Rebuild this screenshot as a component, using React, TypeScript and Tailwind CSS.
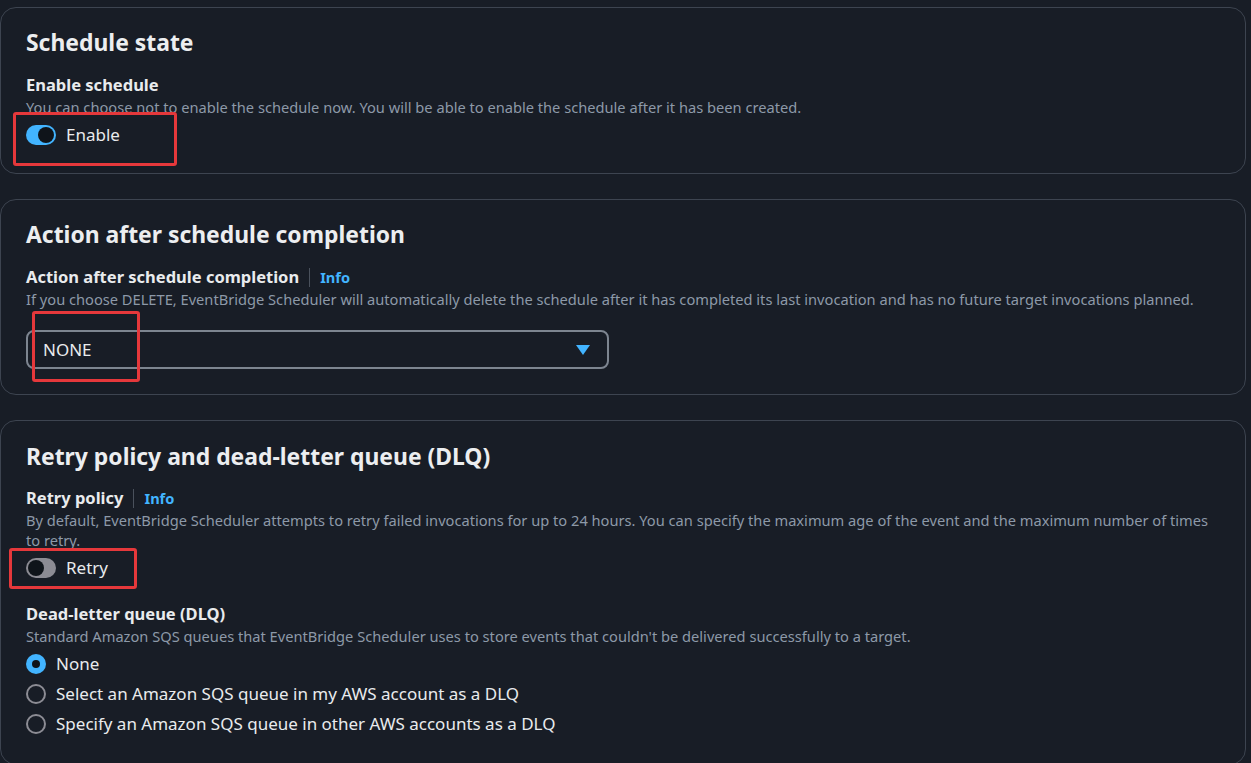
import React from 'react';

const Card: React.FC<{ children: React.ReactNode; className?: string }> = ({ children, className }) => (
  <div className={`border border-[#3d4450] rounded-[16px] bg-[#181d26] px-[25px] ${className ?? ''}`}>{children}</div>
);

const Heading: React.FC<{ children: React.ReactNode }> = ({ children }) => (
  <h2 className="text-[22.9px] leading-[32px] font-bold text-[#eceef0]">{children}</h2>
);

const Label: React.FC<{ children: React.ReactNode; info?: boolean }> = ({ children, info }) => (
  <div className="flex items-center text-[16.5px] leading-[22px] font-bold text-[#e9ebed]">
    <span>{children}</span>
    {info && (
      <>
        <span className="mx-[10px] h-[19px] w-px bg-[#4a515c]" />
        <span className="text-[14.6px] text-[#42b4ff]">Info</span>
      </>
    )}
  </div>
);

const Desc: React.FC<{ children: React.ReactNode }> = ({ children }) => (
  <p className="mt-[1px] text-[14.65px] leading-[20px] text-[#8d99a8]">{children}</p>
);

const Toggle: React.FC<{ on: boolean; label: string }> = ({ on, label }) => (
  <div className="flex items-center h-[24px]">
    <div
      className={`w-[30px] h-[20px] rounded-full flex items-center px-[2px] ${
        on ? 'bg-[#42b4ff] justify-end' : 'bg-[#8c8c94] justify-start'
      }`}
    >
      <div className="w-[16px] h-[16px] rounded-full bg-[#0f141a]" />
    </div>
    <span className="ml-[10px] text-[17px] text-[#e9ebed]">{label}</span>
  </div>
);

const Radio: React.FC<{ checked?: boolean; label: string }> = ({ checked, label }) => (
  <div className="flex items-center h-[30px]">
    {checked ? (
      <div className="w-[20px] h-[20px] rounded-full bg-[#42b4ff] flex items-center justify-center">
        <div className="w-[8px] h-[8px] rounded-full bg-[#0f141a]" />
      </div>
    ) : (
      <div className="w-[20px] h-[20px] rounded-full border-2 border-[#8c8c94]" />
    )}
    <span className="ml-[10px] text-[17px] text-[#e9ebed]">{label}</span>
  </div>
);

const RedBox: React.FC<{ className: string }> = ({ className }) => (
  <div className={`absolute border-[3px] border-[#e5383b] rounded-[3px] pointer-events-none ${className}`} />
);

export default function App() {
  return (
    <div
      className="relative w-[1251px] h-[763px] overflow-hidden bg-[#181d26] pt-[7px] pr-[5px]"
      style={{ fontFamily: '"Noto Sans", "Open Sans", sans-serif' }}
    >
      <div className="flex flex-col gap-[25px]">
        <Card className="pt-[19px] pb-[26px]">
          <Heading>Schedule state</Heading>
          <div className="mt-[15px]">
            <Label>Enable schedule</Label>
            <Desc>You can choose not to enable the schedule now. You will be able to enable the schedule after it has been created.</Desc>
            <div className="mt-[6px]">
              <Toggle on label="Enable" />
            </div>
          </div>
        </Card>

        <Card className="pt-[19px] pb-[25px]">
          <Heading>Action after schedule completion</Heading>
          <div className="mt-[15px]">
            <Label info>Action after schedule completion</Label>
            <Desc>
              If you choose DELETE, EventBridge Scheduler will automatically delete the schedule after it has completed its last invocation and has no future target invocations planned.
            </Desc>
            <div className="mt-[21px] w-[583px] h-[39px] border-2 border-[#7d8590] rounded-[8px] flex items-center justify-between pl-[15px] pr-[17px]">
              <span className="text-[17px] text-[#e9ebed]">NONE</span>
              <svg width="14" height="10" viewBox="0 0 14 10">
                <path d="M0 0 H14 L7 10 Z" fill="#42b4ff" />
              </svg>
            </div>
          </div>
        </Card>

        <Card className="pt-[20px] pb-[25px]">
          <Heading>Retry policy and dead-letter queue (DLQ)</Heading>
          <div className="mt-[14px]">
            <Label info>Retry policy</Label>
            <Desc>
              By default, EventBridge Scheduler attempts to retry failed invocations for up to 24 hours. You can specify the maximum age of the event and the maximum number of times to retry.
            </Desc>
            <div className="mt-[6px]">
              <Toggle on={false} label="Retry" />
            </div>
          </div>
          <div className="mt-[23px]">
            <Label>Dead-letter queue (DLQ)</Label>
            <Desc>Standard Amazon SQS queues that EventBridge Scheduler uses to store events that couldn't be delivered successfully to a target.</Desc>
            <div className="mt-[3px] flex flex-col">
              <Radio checked label="None" />
              <Radio label="Select an Amazon SQS queue in my AWS account as a DLQ" />
              <Radio label="Specify an Amazon SQS queue in other AWS accounts as a DLQ" />
            </div>
          </div>
        </Card>
      </div>

      <RedBox className="left-[13px] top-[112px] w-[164px] h-[54px]" />
      <RedBox className="left-[32px] top-[311px] w-[108px] h-[71px]" />
      <RedBox className="left-[9px] top-[548px] w-[128px] h-[41px]" />
    </div>
  );
}
